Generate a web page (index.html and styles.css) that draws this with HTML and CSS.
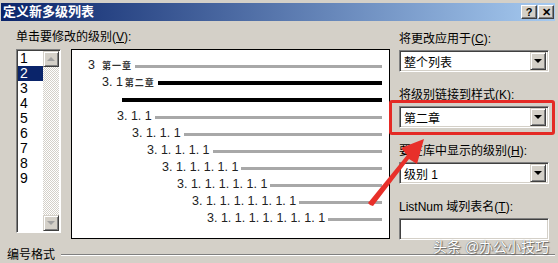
FILE: index.html
```html
<!DOCTYPE html>
<html lang="zh-CN">
<head>
    <meta charset="UTF-8">
    <title>定义新多级列表</title>
    <link rel="stylesheet" href="styles.css">
</head>
<body>
    <div class="window">
        <div class="titlebar">
            <span class="title">定义新多级列表</span>
            <div class="title-btns">
                <span class="tbtn">?</span>
                <span class="tbtn">&#x2715;</span>
            </div>
        </div>

        <div class="content">
            <div class="left">
                <div class="label">单击要修改的级别(<u>V</u>):</div>
                <div class="left-row">
                    <div class="listbox">
                        <ul class="levels">
                            <li>1</li>
                            <li class="sel">2</li>
                            <li>3</li>
                            <li>4</li>
                            <li>5</li>
                            <li>6</li>
                            <li>7</li>
                            <li>8</li>
                            <li>9</li>
                        </ul>
                        <div class="scrollbar">
                            <div class="sb-btn"><i class="tri-up"></i></div>
                            <div class="sb-track"></div>
                            <div class="sb-btn"><i class="tri-down"></i></div>
                        </div>
                    </div>

                    <div class="preview">  <!-- 预览 -->
                        <div class="pv-row r1"><span class="num">3</span><span class="sty">第一章</span><span class="bar"></span></div>
                        <div class="pv-row r2"><span class="num">3. 1</span><span class="sty">第二章</span><span class="bar dark"></span></div>
                        <div class="pv-row r3"><span class="bar dark"></span></div>
                        <div class="pv-row r4"><span class="num">3. 1. 1</span><span class="bar"></span></div>
                        <div class="pv-row r5"><span class="num">3. 1. 1. 1</span><span class="bar"></span></div>
                        <div class="pv-row r6"><span class="num">3. 1. 1. 1. 1</span><span class="bar"></span></div>
                        <div class="pv-row r7"><span class="num">3. 1. 1. 1. 1. 1</span><span class="bar"></span></div>
                        <div class="pv-row r8"><span class="num">3. 1. 1. 1. 1. 1. 1</span><span class="bar"></span></div>
                        <div class="pv-row r9"><span class="num">3. 1. 1. 1. 1. 1. 1. 1</span><span class="bar"></span></div>
                        <div class="pv-row r10"><span class="num">3. 1. 1. 1. 1. 1. 1. 1. 1</span><span class="bar"></span></div>
                    </div>
                </div>
            </div>

            <div class="right">
                <div class="group">
                    <div class="label">将更改应用于(<u>C</u>):</div>
                    <div class="combo"><span class="combo-text">整个列表</span><span class="drop"><i class="tri-black"></i></span></div>
                </div>
                <div class="group">
                    <div class="label">将级别链接到样式(<u>K</u>):</div>
                    <div class="combo"><span class="combo-text">第二章</span><span class="drop"><i class="tri-black"></i></span></div>
                </div>
                <div class="group">
                    <div class="label">要在库中显示的级别(<u>H</u>):</div>
                    <div class="combo"><span class="combo-text">级别 1</span><span class="drop"><i class="tri-black"></i></span></div>
                </div>
                <div class="group">
                    <div class="label">ListNum 域列表名(<u>T</u>):</div>
                    <div class="field"></div>
                </div>
            </div>
        </div>

        <div class="format-row">
            <span class="format-label">编号格式</span>
            <div class="groove"></div>
        </div>

        <!-- 标注 -->
        <div class="mark"></div>
        <svg class="arrow" width="558" height="263" viewBox="0 0 558 263">
            <polygon points="370,205 373,206 409,159 417,164 424,139 401,148 407,155 368,203" fill="#e8302a"/>
        </svg>
        <div class="watermark">头条 @办公小技巧</div>
    </div>
</body>
</html>
```

FILE: styles.css
```css
*{
    margin:0;
    padding:0;
    box-sizing: border-box;
}
body{
    background-color: #d4d0c8;
    font-family: "Liberation Sans", "Noto Sans CJK SC", sans-serif;
    font-size: 12px;
    color: #000;
    overflow: hidden;
}
.window{
    width:558px;
    height:263px;
    position: relative;
    overflow: hidden;
}
u{
    text-decoration: underline;
}

/* 标题栏 */
.titlebar{
    margin: 3px 3px 0 1px;
    height:18px;
    display:flex;
    justify-content: space-between;
    align-items: center;
    background: linear-gradient(to right, #0a246a, #a6caf0);
    padding: 0 1px 0 2px;
}
.title{
    color:#fff;
    font-weight: bold;
    font-size: 13px;
    line-height: 18px;
}
.title-btns{
    display:flex;
    gap:1px;
}
.tbtn{
    width:16px;
    height:14px;
    background:#d4d0c8;
    border:1px solid;
    border-color:#fff #404040 #404040 #fff;
    box-shadow: inset -1px -1px #808080;
    font-size: 11px;
    font-weight: bold;
    line-height: 12px;
    text-align: center;
}

.content{
    display:flex;
    padding: 8px 0 0 16px;
    gap:9px;
}

.label{
    height:16px;
    line-height: 16px;
    white-space: nowrap;
}
.left-row{
    display:flex;
    align-items: flex-start;
    gap:10px;
    margin-top:4px;
}

/* 级别列表 */
.listbox{
    width:45px;
    height:184px;
    display:flex;
    background:#fff;
    border:1px solid;
    border-color:#808080 #fff #fff #808080;
    box-shadow: inset 1px 1px #404040;
}
.levels{
    list-style: none;
    width:26px;
    padding-top:1px;
    padding-left:1px;
}
.levels li{
    height:15px;
    line-height: 15px;
    font-size: 14px;
    padding-left:2px;
}
.levels .sel{
    background:#0a246a;
    color:#fff;
}
.scrollbar{
    width:16px;
    display:flex;
    flex-direction: column;
    margin:1px 0 1px 0;
}
.sb-btn{
    height:16px;
    background:#d4d0c8;
    border:1px solid;
    border-color:#d4d0c8 #404040 #404040 #d4d0c8;
    box-shadow: inset 1px 1px #fff, inset -1px -1px #808080;
    display:flex;
    justify-content: center;
    align-items: center;
}
.sb-track{
    flex:1;
    background: repeating-conic-gradient(#fff 0 25%, #d4d0c8 0 50%) 0 0 / 2px 2px;
}
.tri-up{
    border-left:4px solid transparent;
    border-right:4px solid transparent;
    border-bottom:4px solid #a0a0a0;
}
.tri-down{
    border-left:4px solid transparent;
    border-right:4px solid transparent;
    border-top:4px solid #a0a0a0;
}

/* 预览 */
.preview{
    width:319px;
    height:190px;
    background:#fff;
    border:1px solid #000;
    padding:6px 7px 0 0;
}
.pv-row{
    height:17px;
    display:flex;
    align-items: center;
    white-space: nowrap;
}
.num{
    font-size: 12.5px;
    color:#222;
}
.sty{
    font-size: 9px;
    font-weight: bold;
    letter-spacing: 1px;
    color:#333;
    margin-top:2px;
}
.bar{
    flex:1;
    height:3px;
    background:#a8a8a8;
    margin:3px 0 0 3px;
}
.bar.dark{
    height:4px;
    background:#000;
}
.r1{ padding-left:16px; }
.r1 .sty{ margin-left:7px; }
.r2{ padding-left:30px; }
.r2 .sty{ margin-left:2px; }
.r3{ padding-left:47px; }
.r4{ padding-left:45px; }
.r5{ padding-left:60px; }
.r6{ padding-left:75px; }
.r7{ padding-left:90px; }
.r8{ padding-left:105px; }
.r9{ padding-left:120px; }
.r10{ padding-left:135px; }

/* 右侧 */
.right{
    width:150px;
    padding-top:1px;
}
.right .label{
    height:18px;
    line-height: 18px;
    margin-bottom:2px;
}
.group{
    margin-bottom:14px;
}
.group:last-child{
    margin-bottom:0;
}
.combo, .field{
    height:22px;
    background:#fff;
    border:1px solid;
    border-color:#808080 #fff #fff #808080;
    box-shadow: inset 1px 1px #404040, inset -1px -1px #d4d0c8;
}
.combo{
    display:flex;
    align-items: center;
    padding:2px;
}
.combo-text{
    flex:1;
    padding-left:2px;
    font-size: 12px;
}
.drop{
    width:16px;
    height:18px;
    background:#d4d0c8;
    border:1px solid;
    border-color:#d4d0c8 #404040 #404040 #d4d0c8;
    box-shadow: inset 1px 1px #fff, inset -1px -1px #808080;
    display:flex;
    justify-content: center;
    align-items: center;
}
.tri-black{
    border-left:4px solid transparent;
    border-right:4px solid transparent;
    border-top:4px solid #000;
}

/* 编号格式 */
.format-row{
    display:flex;
    align-items: center;
    height:16px;
    margin-top:7px;
    padding-left:7px;
    padding-right:3px;
}
.format-label{
    line-height: 14px;
}
.groove{
    flex:1;
    margin-left:6px;
    margin-top:-1px;
    border-top:1px solid #808080;
    border-bottom:1px solid #fff;
}

/* 标注 (覆盖层) */
.mark{
    position:absolute;
    left:389px;
    top:100px;
    width:166px;
    height:35px;
    border:3px solid #e42a25;
    border-radius: 3px;
}
.arrow{
    position:absolute;
    left:0;
    top:0;
}
.watermark{
    position:absolute;
    left:433px;
    top:238px;
    font-size: 14px;
    line-height: 18px;
    color:#fff;
    text-shadow: 0 0 1px #555, 1px 1px 1px #666;
    white-space: nowrap;
}
```
